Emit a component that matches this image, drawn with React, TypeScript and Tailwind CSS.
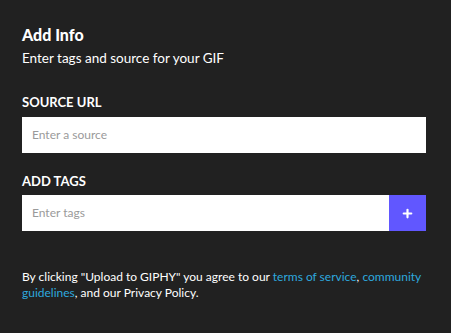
import { Plus } from "lucide-react";

export default function App() {
  return (
    <div className="min-h-[333px] w-full bg-[#212121] px-[22px] pt-[26px] text-white" style={{ fontFamily: "Lato, 'Noto Sans', sans-serif" }}>
      <h2 className="text-[16px] font-black leading-[18px]">Add Info</h2>
      <p className="mt-[5px] text-[13.5px] leading-[18px]">Enter tags and source for your GIF</p>

      <label className="mt-[27px] block text-[13px] font-bold leading-[16px]">SOURCE URL</label>
      <div className="mt-[7px] flex h-[36px] w-[404px] items-center bg-white px-[10px]">
        <input
          placeholder="Enter a source"
          className="w-full bg-transparent text-[12px] text-gray-800 outline-none placeholder:text-[#9a9a9a]"
        />
      </div>

      <label className="mt-[20px] block text-[13px] font-bold leading-[16px]">ADD TAGS</label>
      <div className="mt-[6px] flex h-[36px] w-[404px] bg-white">
        <input
          placeholder="Enter tags"
          className="flex-1 bg-transparent px-[10px] text-[12px] text-gray-800 outline-none placeholder:text-[#9a9a9a]"
        />
        <button className="flex w-[37px] items-center justify-center bg-[#6157ff]">
          <Plus size={13} strokeWidth={4} />
        </button>
      </div>

      <p className="mt-[38px] text-[12px] leading-[16px]">
        By clicking "Upload to GIPHY" you agree to our <span className="text-[#2ea8de]">terms of service</span>,{" "}
        <span className="text-[#2ea8de]">community guidelines</span>, and our Privacy Policy.
      </p>
    </div>
  );
}
